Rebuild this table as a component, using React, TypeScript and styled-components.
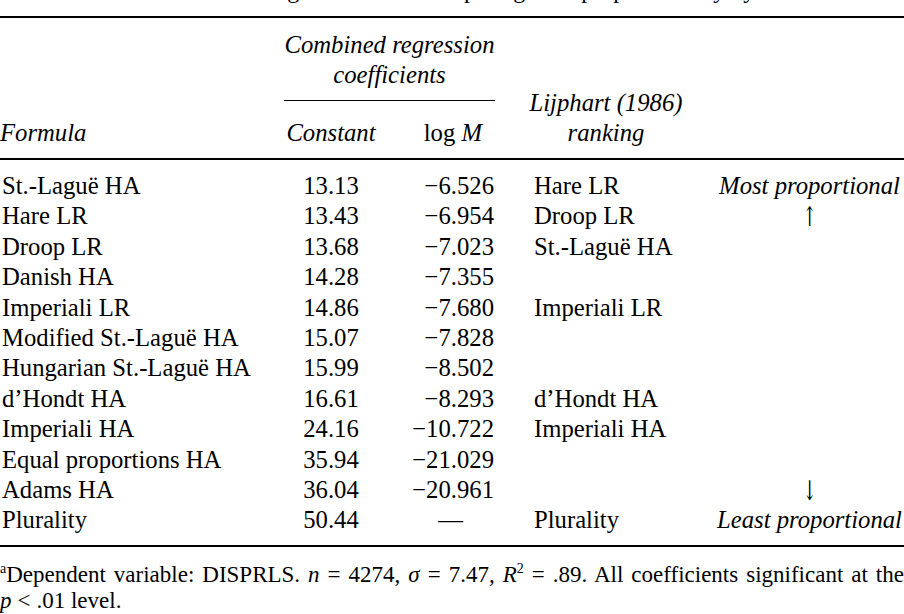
import React from 'react'
import styled, { createGlobalStyle } from 'styled-components'

const GlobalStyle = createGlobalStyle`
  html, body {
    margin: 0;
    padding: 0;
    background: #fff;
  }
  body {
    font-family: 'Liberation Serif', 'Times New Roman', serif;
    color: #000;
  }
`

const COLS = '284px 94px 119px 218px 189px'

const Page = styled.div`
  width: 904px;
  height: 614px;
  overflow: hidden;
  font-size: 24.7px;
`

// caption of the table, cut off by the top edge: only its descenders show
const Caption = styled.div`
  margin-top: -25px;
  height: 29px;
  line-height: 30px;
  font-size: 24px;
  padding-left: 218px;
  white-space: nowrap;
`

const Rule = styled.div<{ $gap?: number }>`
  height: 2px;
  background: #000;
  margin-top: ${(p) => p.$gap ?? 0}px;
`

const Head = styled.div`
  display: grid;
  grid-template-columns: ${COLS};
  grid-template-rows: auto auto;
  line-height: 30px;
  font-style: italic;
  padding: 12px 0 10px;
`

const HeadCell = styled.div<{ $col: string; $row: string; $align?: string; $pr?: number }>`
  grid-column: ${(p) => p.$col};
  grid-row: ${(p) => p.$row};
  align-self: end;
  text-align: ${(p) => p.$align ?? 'left'};
  padding-right: ${(p) => p.$pr ?? 0}px;
`

const Group = styled.div`
  grid-column: 2 / span 2;
  grid-row: 1;
  text-align: center;
  padding-bottom: 10px;
  margin-right: 2px;
  margin-bottom: 17px;
  border-bottom: 1px solid #000;
`

const Upright = styled.span`
  font-style: normal;
`

const Body = styled.div`
  display: grid;
  grid-template-columns: ${COLS};
  grid-auto-rows: 30.4px;
  line-height: 30.4px;
  padding: 11px 0 9px;
`

const Cell = styled.div<{ $align?: string; $pr?: number; $pl?: number; $italic?: boolean }>`
  text-align: ${(p) => p.$align ?? 'left'};
  padding-right: ${(p) => p.$pr ?? 0}px;
  padding-left: ${(p) => p.$pl ?? 0}px;
  font-style: ${(p) => (p.$italic ? 'italic' : 'normal')};
  white-space: nowrap;
`

const Arrow = styled.span`
  display: inline-block;
  font-family: 'DejaVu Serif', 'Liberation Serif', serif;
  font-size: 21px;
  font-weight: 300;
  transform: scale(0.8, 1.3);
`

const Note = styled.div`
  margin-top: 15px;
  font-size: 23px;
  line-height: 26px;
`

const NoteLine = styled.div<{ $justify?: boolean }>`
  white-space: nowrap;
  ${(p) =>
    p.$justify &&
    `
    white-space: normal;
    text-align: justify;
    text-align-last: justify;
  `}
`

const Sup = styled.sup`
  font-size: 14px;
  line-height: 0;
  vertical-align: 9px;
`

const M = styled.i`
  font-style: italic;
`

const Rel = styled.span`
  padding: 0 6px;
`

type Row = {
  formula: string
  constant: string
  logM: string
  rank?: string
  note?: string
}

const rows: Row[] = [
  { formula: 'St.-Laguë HA', constant: '13.13', logM: '−6.526', rank: 'Hare LR', note: 'Most proportional' },
  { formula: 'Hare LR', constant: '13.43', logM: '−6.954', rank: 'Droop LR', note: '↑' },
  { formula: 'Droop LR', constant: '13.68', logM: '−7.023', rank: 'St.-Laguë HA' },
  { formula: 'Danish HA', constant: '14.28', logM: '−7.355' },
  { formula: 'Imperiali LR', constant: '14.86', logM: '−7.680', rank: 'Imperiali LR' },
  { formula: 'Modified St.-Laguë HA', constant: '15.07', logM: '−7.828' },
  { formula: 'Hungarian St.-Laguë HA', constant: '15.99', logM: '−8.502' },
  { formula: 'd’Hondt HA', constant: '16.61', logM: '−8.293', rank: 'd’Hondt HA' },
  { formula: 'Imperiali HA', constant: '24.16', logM: '−10.722', rank: 'Imperiali HA' },
  { formula: 'Equal proportions HA', constant: '35.94', logM: '−21.029' },
  { formula: 'Adams HA', constant: '36.04', logM: '−20.961', note: '↓' },
  { formula: 'Plurality', constant: '50.44', logM: '—', rank: 'Plurality', note: 'Least proportional' },
]

const App = () => {
  return (
    <Page>
      <GlobalStyle />
      <Caption>Ranking of formulas comparing their proportionality by</Caption>
      <Rule $gap={12} />
      <Head>
        <HeadCell $col="1" $row="1 / span 2">Formula</HeadCell>
        <Group>
          Combined regression
          <br />
          coefficients
        </Group>
        <HeadCell $col="2" $row="2" $align="center">Constant</HeadCell>
        <HeadCell $col="3" $row="2" $align="right" $pr={15}>
          <Upright>log</Upright> M
        </HeadCell>
        <HeadCell $col="4" $row="1 / span 2" $align="center">
          Lijphart (1986)
          <br />
          ranking
        </HeadCell>
      </Head>
      <Rule />
      <Body>
        {rows.map((r) => {
          const arrow = r.note === '↑' || r.note === '↓'
          return (
            <React.Fragment key={r.formula}>
              <Cell $pl={2}>{r.formula}</Cell>
              <Cell $align="center">{r.constant}</Cell>
              <Cell $align="right" $pr={r.logM === '—' ? 34 : 3}>{r.logM}</Cell>
              <Cell $pl={37}>{r.rank ?? ''}</Cell>
              <Cell $align="center" $italic={!arrow}>
                {arrow ? <Arrow>{r.note}</Arrow> : r.note ?? ''}
              </Cell>
            </React.Fragment>
          )
        })}
      </Body>
      <Rule />
      <Note>
        <NoteLine $justify>
          <Sup>a</Sup>Dependent variable: DISPRLS. <M>n</M> = 4274, <M>σ</M> = 7.47, <M>R</M>
          <Sup>2</Sup> = .89. All coefficients significant at the
        </NoteLine>
        <NoteLine>
          <M>p</M>
          <Rel>&lt;</Rel>.01 level.
        </NoteLine>
      </Note>
    </Page>
  )
}

export default App
